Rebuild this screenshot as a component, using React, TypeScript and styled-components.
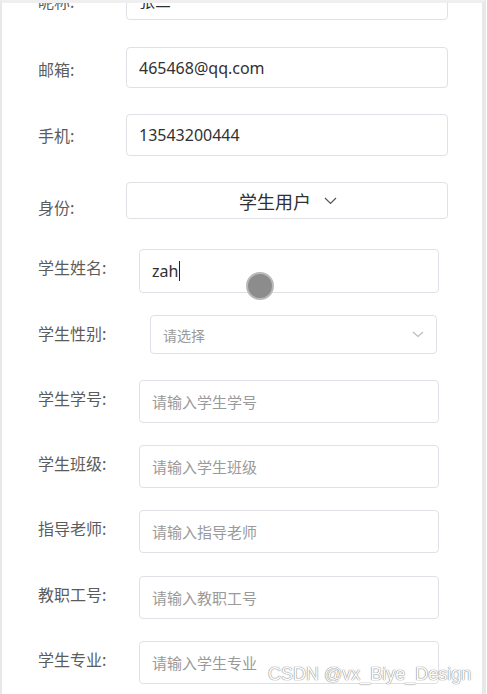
import React from 'react';
import styled, {createGlobalStyle} from 'styled-components';

const GlobalStyle = createGlobalStyle`
  html, body {
    margin: 0;
    padding: 0;
    background: #fff;
  }
  body {
    font-family: "Noto Sans", "Noto Sans CJK SC", sans-serif;
  }
`

const Panel = styled.div`
  position: relative;
  box-sizing: border-box;
  height: 694px;
  margin-right: 1px;
  overflow: hidden;
  background: #fff;
  border-top: 3px solid #efefef;
  border-left: 2px solid #e8e8e8;
  border-right: 4px solid #e8e8e8;
`

const Form = styled.div`
  display: flex;
  flex-direction: column;
  margin-top: -24px;
  padding-left: 36px;
`

const Row = styled.div<{ $gap: number }>`
  display: flex;
  align-items: flex-start;
  margin-top: ${p => p.$gap}px;
`

// $mid: distance from the row top to the middle of the label text
const Label = styled.div<{ $width: number; $mid: number }>`
  flex: none;
  width: ${p => p.$width}px;
  padding-top: ${p => p.$mid - 9}px;
  line-height: 18px;
  font-size: 16px;
  color: #5c5c5c;
  white-space: nowrap;
  font-family: "Noto Sans CJK SC", sans-serif;
`

const Field = styled.div<{ $width: number; $height: number }>`
  position: relative;
  box-sizing: border-box;
  flex: none;
  display: flex;
  align-items: center;
  width: ${p => p.$width}px;
  height: ${p => p.$height}px;
  padding: 0 12px;
  border: 1px solid #dfe1e6;
  border-radius: 4px;
  background: #fff;
`

const Value = styled.span<{ $size?: number }>`
  font-size: ${p => p.$size || 16}px;
  color: #303133;
  font-family: "Noto Sans", "Noto Sans CJK SC", sans-serif;
  white-space: nowrap;
`

const Placeholder = styled.span<{ $size?: number }>`
  font-size: ${p => p.$size || 15}px;
  color: #9a9a9a;
  font-family: "Noto Sans CJK SC", sans-serif;
  white-space: nowrap;
`

const Caret = styled.span`
  display: inline-block;
  width: 1px;
  height: 20px;
  margin-left: 1px;
  background: #222;
  vertical-align: middle;
`

const Centered = styled.div`
  flex: 1;
  display: flex;
  justify-content: center;
  align-items: center;
  gap: 13px;
  padding-left: 2px;
`

const Arrow = styled.svg<{ $right?: boolean }>`
  flex: none;
  ${p => p.$right ? 'margin-left: auto;' : ''}
`

const Pointer = styled.div`
  position: absolute;
  left: 244px;
  top: 269px;
  width: 24px;
  height: 24px;
  border-radius: 50%;
  background: #8c8c8c;
  border: 2px solid #b9b9b9;
  pointer-events: none;
`

const Watermark = styled.div`
  position: absolute;
  left: 266px;
  top: 661px;
  font-family: "Liberation Sans", Arial, sans-serif;
  font-size: 18px;
  color: #fdfdfd;
  text-shadow: 0 0 1px #7a7a7a, 0 0 1px #7a7a7a;
  white-space: nowrap;
`

type Item = {
  label: string
  gap: number
  height: number
  labelW: number
  fieldW: number
  mid: number
  value?: string
  placeholder?: string
}

const top: Item[] = [
  {label: '昵称:', gap: 0, height: 41, labelW: 88, fieldW: 322, mid: 22, value: '张三'},
  {label: '邮箱:', gap: 27, height: 41, labelW: 88, fieldW: 322, mid: 22, value: '465468@qq.com'},
  {label: '手机:', gap: 26, height: 42, labelW: 88, fieldW: 322, mid: 21, value: '13543200444'},
]

const student: Item[] = [
  {label: '学生学号:', gap: 26, height: 43, labelW: 101, fieldW: 300, mid: 18, placeholder: '请输入学生学号'},
  {label: '学生班级:', gap: 22, height: 43, labelW: 101, fieldW: 300, mid: 18, placeholder: '请输入学生班级'},
  {label: '指导老师:', gap: 22, height: 43, labelW: 101, fieldW: 300, mid: 18, placeholder: '请输入指导老师'},
  {label: '教职工号:', gap: 23, height: 43, labelW: 101, fieldW: 300, mid: 18, placeholder: '请输入教职工号'},
  {label: '学生专业:', gap: 22, height: 43, labelW: 101, fieldW: 300, mid: 18, placeholder: '请输入学生专业'},
]

function renderRow(item: Item) {
  return (
    <Row key={item.label} $gap={item.gap}>
      <Label $width={item.labelW} $mid={item.mid}>{item.label}</Label>
      <Field $width={item.fieldW} $height={item.height}>
        {item.value
          ? <Value>{item.value}</Value>
          : <Placeholder>{item.placeholder}</Placeholder>}
      </Field>
    </Row>
  )
}

export default function App() {
  return (
    <Panel>
      <GlobalStyle />
      <Form>
        {top.map(renderRow)}
        <Row $gap={26}>
          <Label $width={88} $mid={25}>身份:</Label>
          <Field $width={322} $height={37}>
            <Centered>
              <Value $size={18}>学生用户</Value>
              <Arrow width="13" height="8" viewBox="0 0 13 8">
                <path d="M1 1l5.5 5.5L12 1" fill="none" stroke="#555" strokeWidth="1.2" />
              </Arrow>
            </Centered>
          </Field>
        </Row>
        <Row $gap={30}>
          <Label $width={101} $mid={18}>学生姓名:</Label>
          <Field $width={300} $height={44}>
            <Value $size={16}>zah</Value>
            <Caret />
          </Field>
        </Row>
        <Row $gap={22}>
          <Label $width={112} $mid={18}>学生性别:</Label>
          <Field $width={287} $height={39}>
            <Placeholder $size={14}>请选择</Placeholder>
            <Arrow $right width="12" height="7" viewBox="0 0 12 7">
              <path d="M1 1l5 4.5L11 1" fill="none" stroke="#b8bcc4" strokeWidth="1.2" />
            </Arrow>
          </Field>
        </Row>
        {student.map(renderRow)}
      </Form>
      <Pointer />
      <Watermark>CSDN @vx_Biye_Design</Watermark>
    </Panel>
  )
}
